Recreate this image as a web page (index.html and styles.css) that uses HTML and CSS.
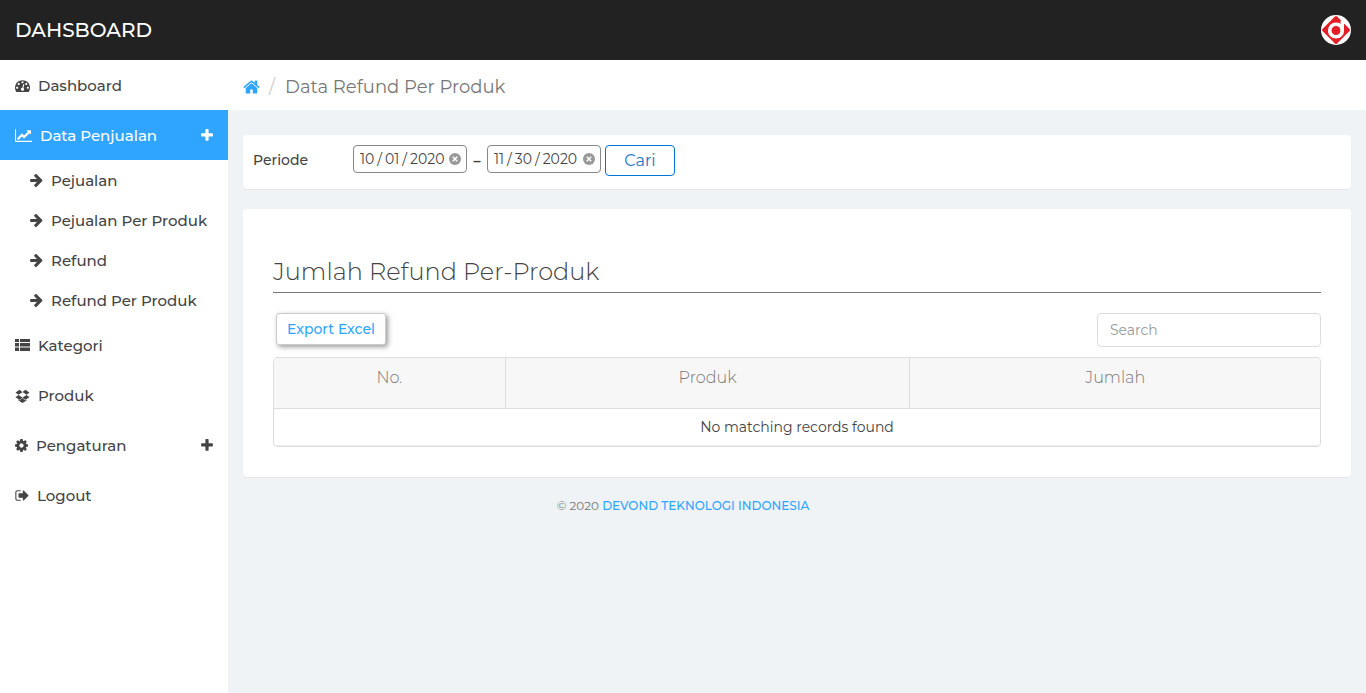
FILE: index.html
```html
<!DOCTYPE html>
<html lang="id">
<head>
<meta charset="utf-8">
<meta name="viewport" content="width=device-width, initial-scale=1">
<title>Data Refund Per Produk</title>
<link rel="stylesheet" href="styles.css">
</head>
<body>
<svg class="sprite" aria-hidden="true">
  <symbol id="plus" viewBox="192 0 1408 1792"><path d="M1600 736v192q0 40-28 68t-68 28h-416v416q0 40-28 68t-68 28h-192q-40 0-68-28t-28-68v-416h-416q-40 0-68-28t-28-68v-192q0-40 28-68t68-28h416v-416q0-40 28-68t68-28h192q40 0 68 28t28 68v416h416q40 0 68 28t28 68z"/></symbol>
  <symbol id="arrow" viewBox="64 64 1664 1792"><path d="M1664 960q0 54-37 91l-651 651q-39 37-91 37-51 0-90-37l-75-75q-38-38-38-91t38-91l293-293h-704q-52 0-84.500-37.500t-32.500-90.500v-128q0-53 32.500-90.500t84.500-37.500h704l-293-294q-38-36-38-90t38-90l75-75q38-38 90-38 53 0 91 38l651 651q37 35 37 90z"/></symbol>
  <symbol id="clear" viewBox="0 0 12 12"><circle cx="6" cy="6" r="6"/><path d="M3.800 3.800l4.400 4.400M8.200 3.800l-4.400 4.400" stroke="#fff" stroke-width="1.600"/></symbol>
</svg>
<div class="page">
  <header class="topbar">
    <h1 class="brand">DAHSBOARD</h1>
    <svg class="avatar" viewBox="0 0 30 30" role="img" aria-label="Devond">
      <circle cx="15" cy="15" r="15" fill="#fff"/>
      <path d="M15 2.500L27.500 15 15 27.500 2.500 15z" fill="#e31e26" stroke="#e31e26" stroke-width="3" stroke-linejoin="round"/>
      <circle cx="15" cy="15.500" r="6.300" fill="none" stroke="#fff" stroke-width="3.600"/>
      <path d="M19.500 6H23V16h-3.500z" fill="#fff"/>
    </svg>
  </header>

  <nav class="sidebar" aria-label="Menu">
    <a class="item" href="#"><svg class="icon" width="15" height="15" viewBox="0 0 1792 1792"><path d="M384 1152q0-53-37.500-90.500t-90.500-37.500-90.500 37.500-37.500 90.500 37.500 90.500 90.500 37.500 90.500-37.500 37.500-90.500zm192-448q0-53-37.500-90.500t-90.500-37.500-90.500 37.500-37.500 90.500 37.500 90.500 90.500 37.500 90.500-37.500 37.500-90.500zm428 481l101-382q6-26-7.500-48.500t-38.500-29.500-48 6.500-30 39.500l-101 382q-60 5-107 43.500t-63 98.500q-20 77 20 146t117 89 146-20 89-117q16-60-6-117t-72-91zm660-33q0-53-37.500-90.500t-90.500-37.500-90.500 37.500-37.500 90.500 37.500 90.500 90.500 37.500 90.500-37.500 37.500-90.500zm-640-640q0-53-37.500-90.500t-90.500-37.500-90.500 37.500-37.500 90.500 37.500 90.500 90.500 37.500 90.500-37.500 37.500-90.500zm448 192q0-53-37.500-90.500t-90.500-37.500-90.500 37.500-37.500 90.500 37.500 90.500 90.500 37.500 90.500-37.500 37.500-90.500zm320 448q0 261-141 483-19 29-54 29h-1402q-35 0-54-29-141-221-141-483 0-182 71-348t191-286 286-191 348-71 348 71 286 191 191 286 71 348z"/></svg><span>Dashboard</span></a>
    <a class="item active" href="#"><svg class="icon" width="17" height="15" viewBox="0 0 2048 1792"><path d="M2048 1536v128h-2048v-1536h128v1408h1920zm-128-1248v435q0 21-19.500 29.500t-35.500-7.500l-121-121-633 633q-10 10-23 10t-23-10l-233-233-416 416-192-192 585-585q10-10 23-10t23 10l233 233 464-464-121-121q-16-16-7.500-35.500t29.500-19.500h435q14 0 23 9t9 23z"/></svg><span>Data Penjualan</span><svg class="icon more" width="12" height="15"><use href="#plus"/></svg></a>
    <ul class="submenu">
      <li><a class="subitem" href="#"><svg class="icon" width="14" height="15"><use href="#arrow"/></svg>Pejualan</a></li>
      <li><a class="subitem" href="#"><svg class="icon" width="14" height="15"><use href="#arrow"/></svg>Pejualan Per Produk</a></li>
      <li><a class="subitem" href="#"><svg class="icon" width="14" height="15"><use href="#arrow"/></svg>Refund</a></li>
      <li><a class="subitem" href="#"><svg class="icon" width="14" height="15"><use href="#arrow"/></svg>Refund Per Produk</a></li>
    </ul>
    <a class="item" href="#"><svg class="icon" width="15" height="15" viewBox="0 0 15 15"><path d="M0 1h4v3H0zM5 1h10v3H5zM0 5h4v3.500H0zM5 5h10v3.500H5zM0 9.500h4v3.500H0zM5 9.500h10v3.500H5z"/></svg><span>Kategori</span></a>
    <a class="item" href="#"><svg class="icon" width="15" height="15" viewBox="0 0 1792 1792"><path d="M402 829l494 305-342 285-490-319zm986 555v108l-490 293v1l-1-1-1 1v-1l-489-293v-108l147 96 342-284v-2l1 1 1-1v2l343 284zm-834-1176l342 285-494 304-338-270zm836 621l338 270-489 319-343-285zm-151-621l489 319-338 270-494-305z"/></svg><span>Produk</span></a>
    <a class="item" href="#"><svg class="icon" width="13" height="15" viewBox="128 0 1536 1792"><path d="M1152 896q0-106-75-181t-181-75-181 75-75 181 75 181 181 75 181-75 75-181zm512-109v222q0 12-8 23t-20 13l-185 28q-19 54-39 91 35 50 107 138 10 12 10 25t-9 23q-27 37-99 108t-94 71q-12 0-26-9l-138-108q-44 23-91 38-16 136-29 186-7 28-36 28h-222q-14 0-24.500-8.500t-11.500-21.500l-28-184q-49-16-90-37l-141 107q-10 9-25 9-14 0-25-11-126-114-165-168-7-10-7-23 0-12 8-23 15-21 51-66.500t54-70.500q-27-50-41-99l-183-27q-13-2-21-12.500t-8-23.500v-222q0-12 8-23t19-13l186-28q14-46 39-92-40-57-107-138-10-12-10-24 0-10 9-23 26-36 98.500-107.500t94.500-71.500q13 0 26 10l138 107q44-23 91-38 16-136 29-186 7-28 36-28h222q14 0 24.500 8.500t11.500 21.500l28 184q49 16 90 37l142-107q9-9 24-9 13 0 25 10 129 119 165 170 7 8 7 22 0 12-8 23-15 21-51 66.500t-54 70.500q26 50 41 98l183 28q13 2 21 12.500t8 23.500z"/></svg><span>Pengaturan</span><svg class="icon more" width="12" height="15"><use href="#plus"/></svg></a>
    <a class="item" href="#"><svg class="icon" width="14" height="15" viewBox="64 0 1600 1792"><path d="M704 1440q0 4 1 20t.5 26.500-3 23.500-10 19.500-20.500 6.500h-320q-119 0-203.500-84.500t-84.500-203.500v-704q0-119 84.500-203.500t203.500-84.500h320q13 0 22.500 9.500t9.500 22.500q0 4 1 20t.5 26.500-3 23.500-10 19.500-20.500 6.500h-320q-66 0-113 47t-47 113v704q0 66 47 113t113 47h312l11.500 1 11.500 3 8 5.500 7 9 2 13.500zm928-544q0 26-19 45l-544 544q-19 19-45 19t-45-19-19-45v-288h-448q-26 0-45-19t-19-45v-384q0-26 19-45t45-19h448v-288q0-26 19-45t45-19 45 19l544 544q19 19 19 45z"/></svg><span>Logout</span></a>
  </nav>

  <main class="main">
    <nav class="breadcrumb" aria-label="Breadcrumb">
      <a class="home" href="#" aria-label="Home"><svg class="icon" width="17" height="18" viewBox="48 0 1696 1792"><path d="M1472 992v480q0 26-19 45t-45 19h-384v-384h-256v384h-384q-26 0-45-19t-19-45v-480q0-1 .5-3t.5-3l575-474 575 474q1 2 1 6zm223-69l-62 74q-8 9-21 11h-3q-13 0-21-7l-692-577-692 577q-12 8-24 7-13-2-21-11l-62-74q-8-10-7-23.500t11-21.500l719-599q32-26 76-26t76 26l244 204v-195q0-14 9-23t23-9h192q14 0 23 9t9 23v408l219 182q10 8 11 21.500t-7 23.500z"/></svg></a>
      <span class="slash">/</span>
      <span>Data Refund Per Produk</span>
    </nav>
    <div class="content">
      <form class="card filter">
        <label class="period" for="from">Periode</label>
        <div class="date"><input id="from" type="date" value="2020-10-01"><button class="clear" type="button" aria-label="Clear start date"><svg class="icon" width="12" height="12"><use href="#clear"/></svg></button></div>
        <span class="dash">–</span>
        <div class="date"><input type="date" value="2020-11-30" aria-label="End date"><button class="clear" type="button" aria-label="Clear end date"><svg class="icon" width="12" height="12"><use href="#clear"/></svg></button></div>
        <button class="find" type="button">Cari</button>
      </form>
      <section class="card report">
        <h2 class="title">Jumlah Refund Per-Produk</h2>
        <div class="tools">
          <button class="export" type="button">Export Excel</button>
          <input class="search" type="text" placeholder="Search" aria-label="Search">
        </div>
        <div class="tablebox">
          <table class="table">
            <colgroup><col class="c-no"><col class="c-product"><col></colgroup>
            <thead><tr><th>No.</th><th>Produk</th><th>Jumlah</th></tr></thead>
            <tbody><tr><td colspan="3">No matching records found</td></tr></tbody>
          </table>
        </div>
      </section>
    </div>
  </main>
  <footer class="footer">© 2020 <a href="#">DEVOND TEKNOLOGI INDONESIA</a></footer>
</div>
</body>
</html>
```
FILE: styles.css
```css
* { box-sizing: border-box; }
body {
  margin: 0;
  background: #eff3f6;
  color: #444;
  font-family: Montserrat, Inter, "Open Sans", sans-serif;
  font-size: 14px;
  line-height: 20px;
}
a { color: #30a5ff; text-decoration: none; }
button, input { font: inherit; }
.sprite { display: none; }
.icon { display: block; flex: none; fill: currentColor; }
.page {
  display: grid;
  grid-template-columns: 228px 1fr;
  grid-template-rows: auto auto 1fr;
  min-height: 100vh;
}
.topbar {
  grid-column: 1 / -1;
  display: flex;
  align-items: center;
  justify-content: space-between;
  height: 60px;
  padding: 0 15px;
  background: #222;
}
.brand { margin: 0; color: #fff; font-size: 20px; font-weight: 500; line-height: 30px; }
.avatar { width: 30px; height: 30px; }

.sidebar { grid-column: 1; grid-row: 2 / 4; background: #fff; font-size: 15px; font-weight: 500; }
.item {
  display: flex;
  align-items: center;
  gap: 8px;
  height: 50px;
  padding: 2px 15px 0;
  color: #444;
}
.sidebar .icon { margin-bottom: 2px; }
.item.active { background: #30a5ff; color: #fff; }
.more { margin-left: auto; }
.submenu { margin: 0; padding: 0; list-style: none; }
.subitem {
  display: flex;
  align-items: center;
  gap: 8px;
  height: 40px;
  padding: 2px 0 0 29px;
  color: #444;
}

.main { grid-column: 2; grid-row: 2; min-width: 0; }
.breadcrumb {
  display: flex;
  align-items: center;
  gap: 9px;
  height: 50px;
  padding: 3px 15px 0;
  background: #fff;
  color: #777;
  font-size: 18px;
}
.slash { padding-right: 1px; color: #ccc; }
.content { padding: 25px 15px 20px; }
.card { border-radius: 4px; background: #fff; box-shadow: 0 1px 1px rgba(0, 0, 0, .05); }
.filter { display: flex; align-items: flex-start; margin-bottom: 20px; padding: 10px 10px 13px; }
.period { width: 100px; padding-top: 5px; font-weight: 500; }
.date {
  display: flex;
  align-items: center;
  justify-content: space-between;
  width: 114px;
  height: 28px;
  padding: 0 5px;
  border: 1px solid #888;
  border-radius: 4px;
}
.date input {
  width: 90px;
  min-width: 0;
  padding: 0;
  border: 0;
  outline: 0;
  background: none;
  color: #444;
}
.date input::-webkit-calendar-picker-indicator { display: none; }
.date input::-webkit-datetime-edit-text { padding: 0 2px; }
.clear { padding: 0; border: 0; background: none; color: #999; }
.dash { width: 20px; padding-top: 6px; text-align: center; font-weight: 700; }
.find {
  width: 70px;
  height: 31px;
  margin-left: 4px;
  padding: 0;
  border: 1px solid #0275d8;
  border-radius: 4px;
  background: #fff;
  color: #1c75c8;
  font-size: 16px;
}
.report { padding: 45px 30px 30px; }
.title {
  margin: 0 0 20px;
  padding-bottom: 3px;
  border-bottom: 1px solid #777;
  color: #444;
  font-size: 24px;
  font-weight: 300;
  line-height: 35px;
}
.tools { display: flex; justify-content: space-between; align-items: flex-start; margin-bottom: 10px; padding-left: 3px; }
.export {
  height: 32px;
  padding: 0 10px;
  border: 1px solid #ccc;
  border-radius: 3px;
  background: #fff;
  box-shadow: 2px 2px 5px rgba(0, 0, 0, .4);
  color: #30a5ff;
  font-weight: 500;
}
.search {
  width: 224px;
  height: 34px;
  padding: 0 12px;
  border: 1px solid #ddd;
  border-radius: 4px;
  outline: 0;
  color: #444;
}
.search::placeholder { color: #999; opacity: 1; }
.tablebox { overflow: hidden; border: 1px solid #ddd; border-radius: 4px; }
.table { width: 100%; border-collapse: collapse; table-layout: fixed; }
.c-no { width: 22.1%; }
.c-product { width: 38.7%; }
.table th {
  height: 50px;
  padding: 10px 8px 0;
  border-bottom: 1px solid #ddd;
  background: #f7f7f7;
  color: #777;
  font-size: 16px;
  font-weight: 300;
  text-align: center;
  vertical-align: top;
}
.table th + th { border-left: 1px solid #ddd; }
.table td { padding: 8px; border-bottom: 1px solid #eee; text-align: center; }
.footer {
  grid-column: 1 / -1;
  grid-row: 3;
  color: #777;
  font-size: 12px;
  line-height: 18px;
  text-align: center;
}
.footer a { font-weight: 500; }
```
